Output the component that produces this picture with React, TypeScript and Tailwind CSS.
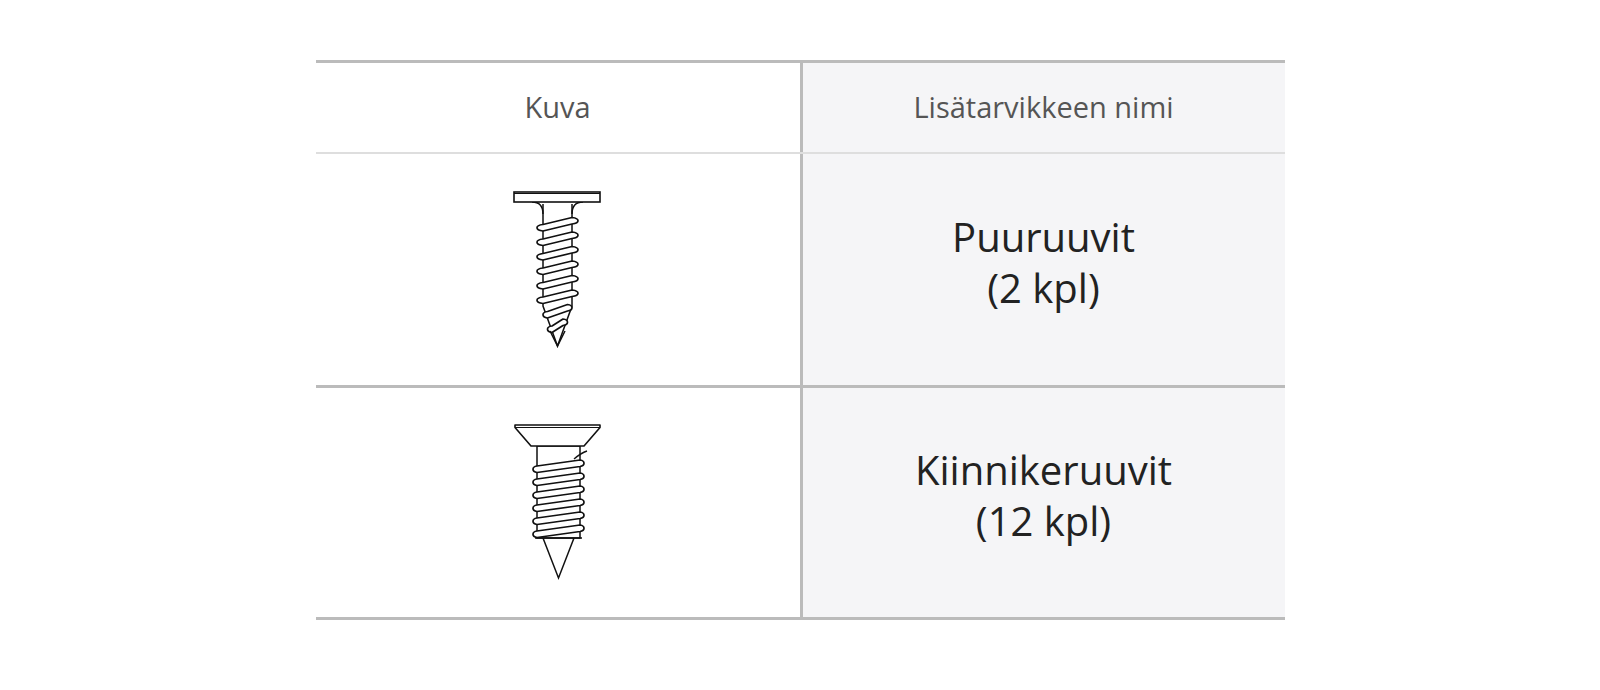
const FONT = { fontFamily: '"Open Sans", "Noto Sans", sans-serif' };

function threadPath(cx: number, y: number, hw: number, ow: number, rise: number, t: number) {
  // one thread band, crest rising to the right, bulging out past the shank
  const l = cx - hw;
  const r = cx + hw;
  const lo = cx - hw - ow;
  const ro = cx + hw + ow;
  const yL = y + rise;
  const yR = y - rise;
  return `M ${l} ${yL} Q ${lo} ${yL + t * 0.1} ${lo} ${yL + t / 2} Q ${lo} ${yL + t * 0.9} ${l} ${yL + t} L ${r} ${yR + t} Q ${ro} ${yR + t * 0.9} ${ro} ${yR + t / 2} Q ${ro} ${yR + t * 0.1} ${r} ${yR} Z`;
}

function WoodScrew() {
  const cx = 45.5;
  const threads = [];
  for (let i = 0; i < 8; i++) {
    const y = 31 + i * 14.5;
    const hw = i < 6 ? 14.5 : 14.5 - (i - 5) * 4.5;
    const ow = i < 6 ? 6 : 4.5;
    threads.push(
      <path key={i} d={threadPath(cx, y, hw, ow, 3.5, 6.5)} fill="white" stroke="#111" strokeWidth="1.7" strokeLinejoin="round" />,
    );
  }
  return (
    <svg width="92" height="160" viewBox="0 0 92 160">
      <path d="M 31 14 L 31 116 L 45.5 156 L 60 116 L 60 14" fill="white" stroke="#111" strokeWidth="1.5" />
      <path d="M 20 12 Q 31 12 31 24 M 71 12 Q 60 12 60 24" fill="none" stroke="#111" strokeWidth="1.5" />
      <rect x="2" y="2" width="86" height="10" fill="white" stroke="#111" strokeWidth="1.6" />
      <line x1="2" y1="3.5" x2="88" y2="3.5" stroke="#111" strokeWidth="1" />
      {threads}
      <path d="M 38 141 L 45.5 156 L 53 141" fill="none" stroke="#111" strokeWidth="1.5" />
    </svg>
  );
}

function MountScrew() {
  const cx = 46.5;
  const threads = [];
  for (let i = 0; i < 6; i++) {
    const y = 40 + i * 13;
    threads.push(
      <path key={i} d={threadPath(cx, y, 21.5, 4, 3, 6.5)} fill="white" stroke="#111" strokeWidth="1.7" strokeLinejoin="round" />,
    );
  }
  return (
    <svg width="92" height="160" viewBox="0 0 92 160">
      <rect x="25" y="23" width="43" height="92" fill="white" stroke="#111" strokeWidth="1.5" />
      <path d="M 62 36 Q 69 30 75 28" fill="none" stroke="#111" strokeWidth="1.4" />
      {threads}
      <path d="M 3 2 L 88 2 L 88 4.5 L 72 23 L 19 23 L 3 4.5 Z" fill="white" stroke="#111" strokeWidth="1.6" strokeLinejoin="round" />
      <line x1="3" y1="4.5" x2="88" y2="4.5" stroke="#111" strokeWidth="1.2" />
      <path d="M 23 115 L 70 115 M 31 115 L 46.5 155 L 62 115" fill="none" stroke="#111" strokeWidth="1.5" />
    </svg>
  );
}

const rows = [
  { name: 'Puuruuvit', qty: '(2 kpl)', icon: <WoodScrew />, h: 'h-[234px]' },
  { name: 'Kiinnikeruuvit', qty: '(12 kpl)', icon: <MountScrew />, h: 'h-[232px]' },
];

export default function App() {
  return (
    <div className="w-full h-[690px] bg-white pt-[60px]" style={FONT}>
      <div className="w-[969px] mx-auto border-t-[3px] border-[#bbbbbb]">
        <div className="flex h-[91px] border-b-2 border-[#dedede]">
          <div className="w-[487px] border-r-[3px] border-[#bbbbbb] flex items-center justify-center text-[29px] text-[#555555] pb-px">
            Kuva
          </div>
          <div className="flex-1 bg-[#f5f5f7] flex items-center justify-center text-[29px] text-[#555555] pb-px">
            Lisätarvikkeen nimi
          </div>
        </div>
        {rows.map((row) => (
          <div key={row.name} className={`flex ${row.h} border-b-[3px] border-[#bbbbbb]`}>
            <div className="w-[487px] border-r-[3px] border-[#bbbbbb] flex items-center justify-center">
              {row.icon}
            </div>
            <div className="flex-1 bg-[#f5f5f7] flex flex-col items-center justify-center pb-[16px] text-[40px] leading-[51px] text-[#222222]">
              <span>{row.name}</span>
              <span>{row.qty}</span>
            </div>
          </div>
        ))}
      </div>
    </div>
  );
}
